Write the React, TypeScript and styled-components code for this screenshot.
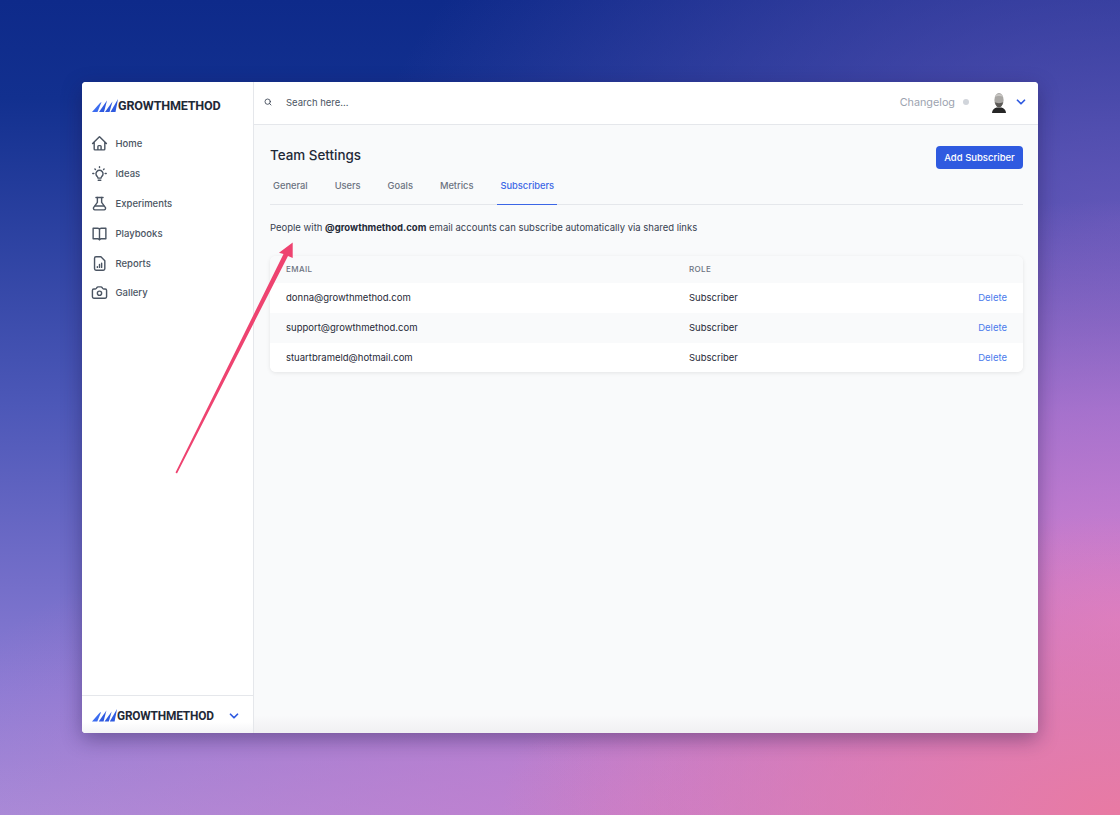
import React from 'react';
import styled, { createGlobalStyle } from 'styled-components';
import { Camera, Search, ChevronDown } from 'lucide-react';

const GlobalStyle = createGlobalStyle`
  html, body {
    margin: 0;
    padding: 0;
  }
  body {
    font-family: Inter, "Liberation Sans", sans-serif;
    -webkit-font-smoothing: antialiased;
  }
  * {
    box-sizing: border-box;
  }
`;

//背景
const Page = styled.div`
  position: relative;
  width: 1120px;
  height: 815px;
  overflow: hidden;
  padding: 82px;
  background:
    radial-gradient(620px 300px at 1120px 815px, #e97aa3 0%, rgba(233, 122, 163, 0.55) 50%, rgba(233, 122, 163, 0) 100%),
    radial-gradient(620px 420px at 1120px 620px, rgba(214, 128, 206, 1) 0%, rgba(204, 126, 214, 0.65) 50%, rgba(204, 126, 214, 0) 100%),
    radial-gradient(760px 340px at 640px 815px, rgba(200, 125, 205, 0.85) 0%, rgba(200, 125, 205, 0) 100%),
    radial-gradient(760px 480px at 1120px 220px, rgba(112, 92, 190, 0.8) 0%, rgba(112, 92, 190, 0) 100%),
    linear-gradient(180deg, #0e2a8a 0%, #12308f 12%, #4d58b8 50%, #8c7cd4 85%, #a58bd8 100%);
`;

const Window = styled.div`
  display: flex;
  width: 956px;
  height: 651px;
  border-radius: 4px;
  overflow: hidden;
  background: #f9fafb;
  box-shadow: 0 6px 20px rgba(30, 20, 70, 0.4);
`;

const Sidebar = styled.aside`
  display: flex;
  flex-direction: column;
  flex: 0 0 172px;
  min-width: 0;
  background: #ffffff;
  border-right: 1px solid #e5e7eb;
`;

const SidebarTop = styled.div`
  flex: 1;
  padding: 14px 0 0 10px;
`;

const LogoRow = styled.div`
  display: flex;
  align-items: center;
  height: 18px;
`;

const LogoText = styled.span<{ $size: number }>`
  font-family: Roboto, "Liberation Sans", sans-serif;
  font-size: ${({ $size }) => $size}px;
  font-weight: 700;
  letter-spacing: -0.2px;
  white-space: nowrap;
  color: #1f2937;
`;

const Nav = styled.nav`
  display: flex;
  flex-direction: column;
  margin: 15px 0 0 -1px;
`;

const NavItem = styled.a`
  display: flex;
  align-items: center;
  gap: 7.5px;
  height: 29.8px;
  font-size: 9.5px;
  font-weight: 500;
  color: #4b5563;
  svg {
    flex: none;
    width: 17px;
    height: 17px;
    color: #4b5563;
  }
`;

const SidebarFooter = styled.div`
  display: flex;
  align-items: center;
  justify-content: space-between;
  height: 38px;
  padding: 2px 12px 0 10px;
  border-top: 1px solid #e5e7eb;
  background: linear-gradient(180deg, #ffffff 70%, #f4f4f6 100%);
`;

const Chevron = styled(ChevronDown)`
  flex: none;
  width: 14px;
  height: 14px;
  color: #2f5ae0;
`;

const Main = styled.main`
  position: relative;
  flex: 1;
  display: flex;
  flex-direction: column;
  min-width: 0;
`;

const TopBar = styled.header`
  display: flex;
  align-items: center;
  flex: 0 0 43px;
  padding: 0 10.5px 2px 10px;
  background: #ffffff;
  border-bottom: 1px solid #e5e7eb;
`;

const SearchIcon = styled(Search)`
  width: 8px;
  height: 8px;
  color: #374151;
`;

const SearchText = styled.span`
  flex: 1;
  margin-left: 14px;
  font-size: 9.5px;
  color: #4b5563;
`;

const Changelog = styled.span`
  font-size: 10.8px;
  color: #9ca3af;
`;

const Dot = styled.span`
  width: 6px;
  height: 6px;
  margin: 0 23px 0 8px;
  border-radius: 50%;
  background: #d1d5db;
`;

const Avatar = styled.svg`
  width: 14px;
  height: 21px;
  margin-right: 7.5px;
`;

const Content = styled.div`
  flex: 1;
  padding: 21px 15px 0 16px;
  background: linear-gradient(180deg, #f9fafb 0, #f9fafb 590px, #f0f0f2 100%);
`;

const HeadRow = styled.div`
  display: flex;
  align-items: center;
  justify-content: space-between;
  height: 23px;
`;

const Title = styled.h1`
  margin: 0 0 5px;
  font-size: 13.4px;
  font-weight: 500;
  color: #1f2937;
`;

const AddButton = styled.button`
  width: 87px;
  height: 23px;
  padding: 0;
  border: 0;
  border-radius: 4px;
  background: #2f5ae0;
  color: #ffffff;
  font-family: inherit;
  font-size: 9.5px;
  font-weight: 500;
`;

const Tabs = styled.div`
  display: flex;
  gap: 21px;
  height: 36px;
  border-bottom: 1px solid #e5e7eb;
`;

const Tab = styled.a<{ $active?: boolean }>`
  display: flex;
  align-items: center;
  height: 36px;
  padding: 0 3px 2px;
  font-size: 9.3px;
  font-weight: 500;
  color: ${({ $active }) => ($active ? '#3b66e6' : '#6b7280')};
  border-bottom: 1px solid ${({ $active }) => ($active ? '#3b66e6' : 'transparent')};
`;

const Intro = styled.p`
  margin: 16px 0 0;
  font-size: 9.5px;
  line-height: 14px;
  color: #374151;
  b {
    font-weight: 700;
    color: #1f2937;
  }
`;

const Card = styled.div`
  margin-top: 21px;
  border-radius: 6px;
  overflow: hidden;
  background: #ffffff;
  box-shadow: 0 1px 4px rgba(0, 0, 0, 0.09);
`;

const Row = styled.div<{ $shade?: boolean; $height: number }>`
  display: grid;
  grid-template-columns: 403px 1fr auto;
  align-items: center;
  height: ${({ $height }) => $height}px;
  padding: 0 16px;
  font-size: 9.5px;
  color: #1f2937;
  background: ${({ $shade }) => ($shade ? '#f9fafb' : '#ffffff')};
`;

const HeadCell = styled.span`
  margin-bottom: 2px;
  font-size: 8px;
  font-weight: 500;
  letter-spacing: 0.4px;
  color: #6b7280;
`;

const DeleteLink = styled.a`
  color: #4b7bec;
`;

const ArrowOverlay = styled.svg`
  position: absolute;
  left: 0;
  top: 0;
  pointer-events: none;
`;

const rows = [
  { email: 'donna@growthmethod.com', shade: false },
  { email: 'support@growthmethod.com', shade: true },
  { email: 'stuartbrameld@hotmail.com', shade: false },
];

const tabs = ['General', 'Users', 'Goals', 'Metrics', 'Subscribers'];

function LogoMark({ width }: { width: number }) {
  return (
    <svg width={width} height={width / 2} viewBox="0 0 26 13" fill="#2f5ae0">
      <path d="M0 13 L8 4 L9.500 3 L5.500 13 Z" fill="#3b6cf0" />
      <path d="M7 13 L15 1.500 L12 13 Z" />
      <path d="M13 13 L20.500 2.500 L17.500 13 Z" />
      <path d="M18.500 13 L26 0 L23.500 13 Z" />
    </svg>
  );
}

type IconProps = { children: React.ReactNode; width?: number };

function OutlineIcon({ children, width = 2 }: IconProps) {
  return (
    <svg viewBox="0 0 24 24" fill="none" stroke="currentColor" strokeWidth={width} strokeLinecap="round" strokeLinejoin="round">
      {children}
    </svg>
  );
}

const navItems = [
  {
    label: 'Home',
    icon: (
      <OutlineIcon>
        <path d="M2.250 12l8.954-8.955c.44-.439 1.152-.439 1.591 0L21.750 12M4.500 9.750v10.125c0 .621.504 1.125 1.125 1.125H9.750v-4.875c0-.621.504-1.125 1.125-1.125h2.250c.621 0 1.125.504 1.125 1.125V21h4.125c.621 0 1.125-.504 1.125-1.125V9.750M8.250 21h8.250" />
      </OutlineIcon>
    ),
  },
  {
    label: 'Ideas',
    icon: (
      <OutlineIcon>
        <path d="M12 2.500v1M5.500 5.500l.8.8M18.500 5.500l-.8.8M2.500 12H4M20 12h1.500" />
        <path d="M9 16.500a5 5 0 1 1 6 0c-.5.4-.7 1-.7 1.500v.5H9.700V18c0-.5-.2-1.100-.7-1.500Z" />
        <path d="M10.200 21.500h3.600" />
      </OutlineIcon>
    ),
  },
  {
    label: 'Experiments',
    icon: (
      <OutlineIcon>
        <path d="M7 3.500h10" />
        <path d="M9 3.500v7L3.600 17.800A2.300 2.300 0 0 0 5.500 21h13a2.300 2.300 0 0 0 1.900-3.200L15 10.500v-7" />
        <path d="M6 15.500h12" />
      </OutlineIcon>
    ),
  },
  {
    label: 'Playbooks',
    icon: (
      <OutlineIcon>
        <path d="M12 6.500C12 5.100 10.900 4.500 9.500 4.500H3v15h6.500c1.400 0 2.500.6 2.500 1.500M12 6.500c0-1.400 1.100-2 2.500-2H21v15h-6.500c-1.400 0-2.500.6-2.500 1.500M12 6.500V21" />
      </OutlineIcon>
    ),
  },
  {
    label: 'Reports',
    icon: (
      <OutlineIcon>
        <path d="M7 2.500h7l5.500 5.500v11.500a2 2 0 0 1-2 2H7a2 2 0 0 1-2-2v-15a2 2 0 0 1 2-2Z" />
        <path d="M9 17.500v-1M12 17.500v-4M15 17.500v-6" />
      </OutlineIcon>
    ),
  },
  { label: 'Gallery', icon: <Camera strokeWidth={2} /> },
];

function App() {
  return (
    <Page>
      <GlobalStyle />
      <Window>
        <Sidebar>
          <SidebarTop>
            <LogoRow>
              <LogoMark width={26} />
              <LogoText $size={12.6}>GROWTHMETHOD</LogoText>
            </LogoRow>
            <Nav>
              {navItems.map((item) => (
                <NavItem key={item.label}>
                  {item.icon}
                  {item.label}
                </NavItem>
              ))}
            </Nav>
          </SidebarTop>
          <SidebarFooter>
            <LogoRow>
              <LogoMark width={25} />
              <LogoText $size={11.9}>GROWTHMETHOD</LogoText>
            </LogoRow>
            <Chevron strokeWidth={3} />
          </SidebarFooter>
        </Sidebar>
        <Main>
          <TopBar>
            <SearchIcon strokeWidth={2.5} />
            <SearchText>Search here...</SearchText>
            <Changelog>Changelog</Changelog>
            <Dot />
            <Avatar viewBox="0 0 14 21">
              <path d="M0 21c0-3 2-4.500 4.500-5.500h5C12 16.500 14 18 14 21Z" fill="#262626" />
              <ellipse cx="7" cy="8" rx="4.600" ry="7" fill="#a9a7a4" />
              <path d="M2.800 10c.8 4 2.500 5.500 4.200 5.500S10.400 14 11.200 10c-1 1.500-7.400 1.500-8.400 0Z" fill="#5c5a57" />
              <path d="M3 5c1-4 7-4 8 0-2-1.200-6-1.200-8 0Z" fill="#c9c7c4" />
            </Avatar>
            <Chevron strokeWidth={3} />
          </TopBar>
          <Content>
            <HeadRow>
              <Title>Team Settings</Title>
              <AddButton>Add Subscriber</AddButton>
            </HeadRow>
            <Tabs>
              {tabs.map((tab) => (
                <Tab key={tab} $active={tab === 'Subscribers'}>{tab}</Tab>
              ))}
            </Tabs>
            <Intro>
              People with <b>@growthmethod.com</b> email accounts can subscribe automatically via shared links
            </Intro>
            <Card>
              <Row $shade $height={27}>
                <HeadCell>EMAIL</HeadCell>
                <HeadCell>ROLE</HeadCell>
              </Row>
              {rows.map((row) => (
                <Row key={row.email} $shade={row.shade} $height={29.8}>
                  <span>{row.email}</span>
                  <span>Subscriber</span>
                  <DeleteLink>Delete</DeleteLink>
                </Row>
              ))}
            </Card>
          </Content>
        </Main>
      </Window>
      <ArrowOverlay width="1120" height="815" viewBox="0 0 1120 815">
        <path d="M175.500 472.500 L283.500 254 L279 252.700 L292.700 242.500 L292.700 258 L288 256 L177 473.500 Z" fill="#ee4370" />
      </ArrowOverlay>
    </Page>
  );
}

export default App;
